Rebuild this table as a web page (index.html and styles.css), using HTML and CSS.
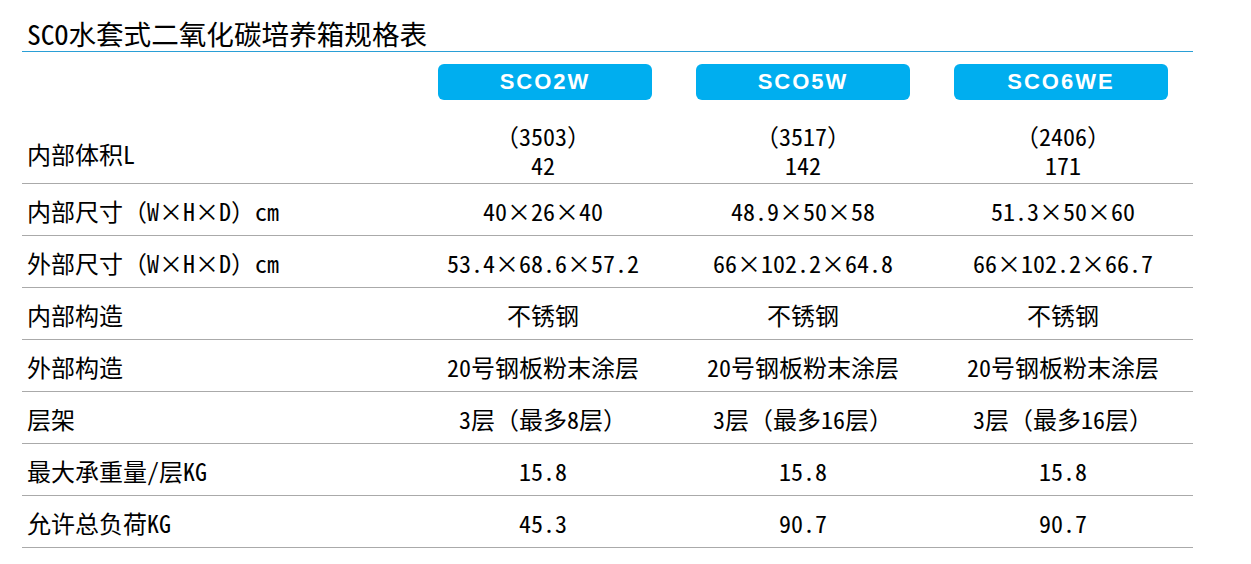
FILE: index.html
```html
<!DOCTYPE html>
<html lang="zh-CN">
<head>
<meta charset="utf-8">
<link rel="stylesheet" href="styles.css">
</head>
<body>
<div class="page">
  <h1 class="title">SCO水套式二氧化碳培养箱规格表</h1>
  <div class="table">
    <div class="row head">
      <div class="label"></div>
      <div class="cell"><span class="pill">SCO2W</span></div>
      <div class="cell"><span class="pill">SCO5W</span></div>
      <div class="cell"><span class="pill">SCO6WE</span></div>
    </div>
    <div class="row tall">
      <div class="label">内部体积L</div>
      <div class="cell multi"><span>（3503）</span><span>42</span></div>
      <div class="cell multi"><span>（3517）</span><span>142</span></div>
      <div class="cell multi"><span>（2406）</span><span>171</span></div>
    </div>
    <div class="row">
      <div class="label">内部尺寸（W×H×D）cm</div>
      <div class="cell">40×26×40</div>
      <div class="cell">48.9×50×58</div>
      <div class="cell">51.3×50×60</div>
    </div>
    <div class="row">
      <div class="label">外部尺寸（W×H×D）cm</div>
      <div class="cell">53.4×68.6×57.2</div>
      <div class="cell">66×102.2×64.8</div>
      <div class="cell">66×102.2×66.7</div>
    </div>
    <div class="row">
      <div class="label">内部构造</div>
      <div class="cell">不锈钢</div>
      <div class="cell">不锈钢</div>
      <div class="cell">不锈钢</div>
    </div>
    <div class="row">
      <div class="label">外部构造</div>
      <div class="cell">20号钢板粉末涂层</div>
      <div class="cell">20号钢板粉末涂层</div>
      <div class="cell">20号钢板粉末涂层</div>
    </div>
    <div class="row">
      <div class="label">层架</div>
      <div class="cell">3层（最多8层）</div>
      <div class="cell">3层（最多16层）</div>
      <div class="cell">3层（最多16层）</div>
    </div>
    <div class="row">
      <div class="label">最大承重量/层KG</div>
      <div class="cell">15.8</div>
      <div class="cell">15.8</div>
      <div class="cell">15.8</div>
    </div>
    <div class="row">
      <div class="label">允许总负荷KG</div>
      <div class="cell">45.3</div>
      <div class="cell">90.7</div>
      <div class="cell">90.7</div>
    </div>
  </div>
</div>
</body>
</html>
```

FILE: styles.css
```css
* { box-sizing: border-box; }
html, body { margin: 0; padding: 0; background: #fff; }
body {
  font-family: "Noto Sans Mono CJK SC", "Noto Sans CJK SC", sans-serif;
  color: #000;
}
.page {
  width: 1171px;
  margin-left: 22px;
  padding-top: 14px;
}
.title {
  margin: 0;
  padding-left: 5px;
  font-size: 27.6px;
  font-weight: 400;
  line-height: 38px;
  height: 38px;
  border-bottom: 1px solid #2a9fd6;
}
.table { display: flex; flex-direction: column; }
.row {
  display: grid;
  grid-template-columns: 391px 260px 260px 260px;
  height: 52px;
  padding-top: 3px;
  border-bottom: 1px solid #aaa;
  align-items: center;
  font-size: 24px;
  line-height: 30px;
}
.row.head {
  grid-template-columns: 394px 258px 258px 258px;
  height: 48px;
  padding-top: 0;
  border-bottom: none;
  align-items: end;
}
.row.tall { height: 84px; padding-top: 0; align-items: end; padding-bottom: 4px; }
.row.tall .label { align-self: end; padding-bottom: 10px; }
.label { padding-left: 5px; white-space: nowrap; }
.cell { text-align: center; white-space: nowrap; }
.multi { display: flex; flex-direction: column; align-items: center; line-height: 29px; }
.pill {
  display: inline-block;
  width: 214px;
  height: 36px;
  line-height: 36px;
  background: #00aeef;
  border-radius: 6px;
  color: #fff;
  font-family: "Liberation Sans", Arial, sans-serif;
  font-weight: 700;
  font-size: 22px;
  letter-spacing: 2px;
}
```
